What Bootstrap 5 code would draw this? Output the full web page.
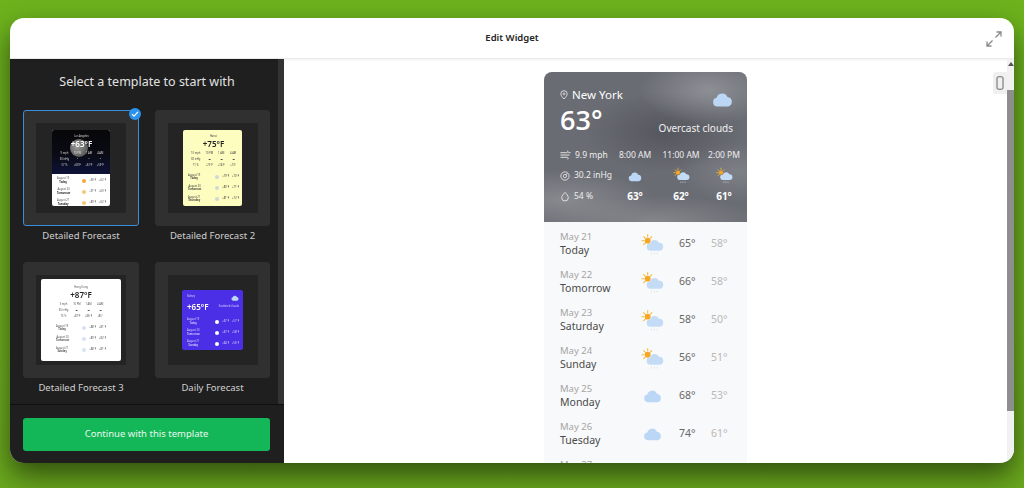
<!DOCTYPE html>
<html lang="en">
<head>
    <meta charset="UTF-8">
    <title>Edit Widget</title>
    <link rel="stylesheet" href="https://cdn.jsdelivr.net/npm/bootstrap@5.3.2/dist/css/bootstrap.min.css">
    <style>
        html, body { height: 488px; overflow: hidden; }
        body { background: linear-gradient(180deg, #6db31d 0%, #6fb020 70%, #6aa81e 100%); font-family: "Noto Sans", "Open Sans", sans-serif; padding: 18px 10px 25px; }
        .app-window { height: 445px; border-radius: 14px; overflow: hidden; box-shadow: 0 12px 28px rgba(0,0,0,.55); background: #fff; }
        .app-head { height: 41px; flex: none; border-bottom: 1px solid #e9e9e9; box-shadow: 0 1px 3px rgba(0,0,0,.06); }
        .app-title { font-size: 9.5px; font-weight: 600; color: #222; }
        .expand-btn { right: 12px; top: 13px; width: 16px; height: 16px; }
        .side-panel { width: 274px; flex: none; background: #1f1f1f; }
        .side-scroll { flex: 1; min-height: 0; overflow: hidden; padding: 0 13px; border-right: 6px solid #333; }
        .side-title { font-size: 12.5px; color: #e2e2e2; padding: 14px 0 19px; line-height: 17px; margin-right: -6px; }
        .tile-grid { display: grid; grid-template-columns: 116px 115px; column-gap: 16px; row-gap: 0; }
        .tile-item { height: 152px; text-align: center; }
        .tile-box { width: 100%; height: 116px; margin-top: 1px; background: #303030; border-radius: 3px; border: 1px solid #303030; }
        .tile-box.picked { border-color: #3a8fd8; }
        .tile-inner { width: 90px; height: 90px; background: #242424; }
        .tile-name { font-size: 9.5px; color: #d0d0d0; line-height: 13px; margin-top: 3px; }
        .tick-mark { right: -3px; top: -3px; width: 12px; height: 12px; background: #2b93ee; border-radius: 50%; }
        .side-foot { height: 59px; flex: none; border-top: 1px solid #101010; padding: 13px 13px 0; }
        .go-btn { height: 33px; width: 247px; background: #14b757; border: 0; border-radius: 3px; color: #e8f8ee; font-size: 9.5px; }

        .preview-pane { min-width: 0; }
        .preview-scroll { width: 7px; flex: none; background: #f1f1f1; }
        .bar-arrow { width: 0; height: 0; border: 3.5px solid transparent; border-top: 0; border-bottom: 4px solid #555; margin: 3px auto 0; }
        .bar-thumb { height: 321px; margin-top: 24px; background: #8e8e8e; }
        .preview-body { flex: 1; padding-top: 13px; overflow: hidden; }
        .phone-btn { right: 7px; top: 13px; width: 14px; height: 22px; background: #f0f0f0; border-radius: 3px 0 0 3px; }

        .wx-card { width: 203px; background: #f8f9fa; border-radius: 8px 8px 0 0; overflow: hidden; }
        .wx-top { height: 150px; padding: 15px 14px 0 16px; color: #fff;
            background:
                radial-gradient(70px 34px at 165px 18px, rgba(170,172,178,.55), transparent),
                radial-gradient(90px 30px at 20px 128px, rgba(165,167,172,.5), transparent),
                radial-gradient(80px 40px at 120px 60px, rgba(60,62,68,.45), transparent),
                radial-gradient(60px 30px at 195px 100px, rgba(150,152,158,.45), transparent),
                radial-gradient(110px 26px at 110px 150px, rgba(150,152,156,.6), transparent),
                #6a6c73; }
        .wx-city { font-size: 11.5px; line-height: 16px; }
        .wx-temp { font-size: 27px; font-weight: 600; line-height: 34px; font-family: "Open Sans", sans-serif; }
        .wx-sky { font-size: 10px; margin-top: 13px; color: #f0f0f0; }
        .wx-hours { display: grid; grid-template-columns: 52px 46px 46px 40px; grid-auto-rows: 20.5px; align-items: center; margin-top: 8px; font-size: 8.5px; color: #eee; text-align: center; }
        .wx-hours .wx-hour-big { font-size: 10px; font-weight: 700; color: #fff; }
        .wx-stat { display: flex; align-items: center; gap: 4px; text-align: left; white-space: nowrap; }
        .wx-days { padding: 3px 0 0 16px; }
        .wx-day { height: 38px; display: grid; grid-template-columns: 81px 38px 32px 30px; align-items: center; }
        .wx-date { font-size: 9.5px; color: #a5a5a5; line-height: 12px; }
        .wx-name { font-size: 10.5px; color: #4a4a4a; line-height: 14px; }
        .wx-high { font-size: 10.5px; color: #666; }
        .wx-low { font-size: 10.5px; color: #b8b8b8; }

        /* template thumbnails */
        .mini-card { font-size: 2.6px; line-height: 3.4px; overflow: hidden; border-radius: 2px; padding: 3px 3px 0 4px; filter: blur(.2px); white-space: nowrap; }
        .mini-temp { font-size: 8px; line-height: 11px; font-weight: 600; }
        .mini-grid { display: grid; grid-template-columns: 1.3fr 1fr 1fr 1fr; row-gap: 2.4px; margin-top: 3px; }
        .mini-day { display: flex; justify-content: space-between; align-items: center; height: 11px; line-height: 3.2px; }
        .mini-right { display: flex; gap: 3px; align-items: center; }
        .mini-dot { width: 4px; height: 4px; border-radius: 50%; display: inline-block; }
        .mini-dark { width: 58px; height: 76px; background: #fff; color: #555; padding: 0; position: relative; }
        .mini-dark-top { height: 44px; padding: 5px 4px 0 5px; color: #ddd; background: linear-gradient(180deg, #070709 0%, #0a0b14 55%, #0d1238 100%); }
        .mini-dark-days { padding: 1px 4px 0 5px; }
        .mini-moon { position: absolute; left: 18px; top: 9px; width: 18px; height: 18px; border-radius: 50%; background: radial-gradient(circle at 40% 45%, #9a9a9a, #5b5b5b 70%, #3c3c3c); }
        .mini-top-text { position: relative; }
        .mini-yellow { width: 59px; height: 76px; background: #fdfdbf; color: #444; padding: 5px 3px 0 5px; }
        .mini-white { width: 80px; height: 82px; background: #fff; color: #555; padding: 7px 15px 0 15px; }
        .mini-blue { width: 61px; height: 60px; background: #4b2fe6; color: #d8d4ff; padding: 5px 4px 0 5px; }
        .mini-strong { color: #222; }
        .mini-bright { color: #fff; }
    </style>
</head>
<body>

<svg width="0" height="0" class="position-absolute">
    <defs>
        <symbol id="i-cloud" viewBox="0 0 24 18">
            <path d="M6 17a5 5 0 0 1-.7-9.9A6.5 6.5 0 0 1 17.6 6 5.6 5.6 0 0 1 18.5 17z" fill="#bcd7f5"/>
        </symbol>
        <symbol id="i-suncloud" viewBox="0 0 24 24">
            <g stroke="#f5b93a" stroke-width="1.1" stroke-linecap="round">
                <path d="M7 1.5v2.4M7 12.5v2M1 8h2.4M2.8 3.8l1.7 1.7M11.2 3.8l-1.7 1.7M2.8 12.2l1.7-1.7"/>
            </g>
            <circle cx="7" cy="8" r="3" fill="#f5a623"/>
            <path d="M10 18.5a3.8 3.8 0 0 1-.5-7.6 5 5 0 0 1 9.3-.8 4.2 4.2 0 0 1 .4 8.4z" fill="#c4dbf6"/>
            <path d="M11 20.5v2M14 20.5v2M17 20.5v2" stroke="#d5dfe9" stroke-width=".8"/>
        </symbol>
        <symbol id="i-pin" viewBox="0 0 10 12">
            <path d="M5 11C3 8.8 1 6.8 1 4.6a4 4 0 0 1 8 0C9 6.8 7 8.8 5 11z" fill="none" stroke="currentColor" stroke-width=".9"/>
            <circle cx="5" cy="4.6" r="1.2" fill="none" stroke="currentColor" stroke-width=".8"/>
        </symbol>
        <symbol id="i-wind" viewBox="0 0 12 10">
            <path d="M0.5 2.5h6.5c2 0 2-2 .6-2M.5 5h10M.5 7.5h7c2 0 2 2 .6 2M9 2.5h2.5" fill="none" stroke="currentColor" stroke-width="1"/>
        </symbol>
        <symbol id="i-gauge" viewBox="0 0 12 12">
            <circle cx="6" cy="6" r="5" fill="none" stroke="currentColor" stroke-width="1"/>
            <circle cx="6" cy="6" r="2" fill="none" stroke="currentColor" stroke-width=".9"/>
            <path d="M6.8 5l2-2.4" stroke="currentColor" stroke-width="1"/>
        </symbol>
        <symbol id="i-drop" viewBox="0 0 12 12">
            <path d="M6 1C4.6 3 2 5 2 7.4a4 4 0 0 0 8 0C10 5 7.4 3 6 1z" fill="none" stroke="currentColor" stroke-width="1"/>
        </symbol>
    </defs>
</svg>

<div class="app-window d-flex flex-column">
    <header class="app-head position-relative d-flex align-items-center justify-content-center">
        <span class="app-title">Edit Widget</span>
        <svg class="expand-btn position-absolute" viewBox="0 0 16 16" fill="none" stroke="#8a8a8a" stroke-width="1.3">
            <path d="M9.5 6.5L15 1M10.5 1H15v4.5M6.5 9.5L1 15M5.5 15H1v-4.5"/>
        </svg>
    </header>

    <div class="d-flex flex-grow-1" style="min-height:0">
        <aside class="side-panel d-flex flex-column">
            <div class="side-scroll">
                <div class="side-title text-center">Select a template to start with</div>
                <div class="tile-grid">
                    <div class="tile-item">
                        <div class="tile-box picked position-relative d-flex align-items-center justify-content-center">
                            <div class="tile-inner d-flex align-items-center justify-content-center">
                                <div class="mini-card mini-dark">
                                    <div class="mini-dark-top">
                                        <span class="mini-moon"></span>
                                        <div class="mini-top-text">
                                            <div>Los Angeles</div>
                                            <div class="mini-temp mini-bright">+63°F</div>
                                            <div class="mini-grid"><span>9 mph</span><span>10 PM</span><span>1 AM</span><span>4 AM</span><span>30 inHg</span><span>•</span><span>•</span><span>•</span><span>57 %</span><span>+63°F</span><span>+61°F</span><span>+59°F</span></div>
                                        </div>
                                    </div>
                                    <div class="mini-dark-days">
                                        <div class="mini-day"><div>August 19<br><b class="mini-strong">Today</b></div><div class="mini-right"><i class="mini-dot" style="background:#f2a93a"></i><span>+90°F</span><span>+62°F</span></div></div>
                                        <div class="mini-day"><div>August 20<br><b class="mini-strong">Tomorrow</b></div><div class="mini-right"><i class="mini-dot" style="background:#f5c676"></i><span>+91°F</span><span>+63°F</span></div></div>
                                        <div class="mini-day"><div>August 21<br><b class="mini-strong">Tuesday</b></div><div class="mini-right"><i class="mini-dot" style="background:#f5c676"></i><span>+89°F</span><span>+62°F</span></div></div>
                                    </div>
                                </div>
                            </div>
                            <span class="tick-mark position-absolute d-flex align-items-center justify-content-center">
                                <svg width="8" height="8" viewBox="0 0 8 8" fill="none" stroke="#fff" stroke-width="1.2"><path d="M1 4.2l2 2 4-4.4"/></svg>
                            </span>
                        </div>
                        <div class="tile-name">Detailed Forecast</div>
                    </div>

                    <div class="tile-item">
                        <div class="tile-box d-flex align-items-center justify-content-center">
                            <div class="tile-inner d-flex align-items-center justify-content-center">
                                <div class="mini-card mini-yellow">
                                    <div>Hanoi</div>
                                    <div class="mini-temp mini-strong">+75°F</div>
                                    <div class="mini-grid"><span>10 mph</span><span>10 PM</span><span>1 AM</span><span>4 AM</span><span>30 inHg</span><span>☁</span><span>☁</span><span>☁</span><span>71 %</span><span>+75°F</span><span>+74°F</span><span>+73°</span></div>
                                    <div class="mini-day mt-1"><div>August 19<br><b>Today</b></div><div class="mini-right"><i class="mini-dot" style="background:#cfd8d8"></i><span>+79°F</span><span>+70°F</span></div></div>
                                    <div class="mini-day"><div>August 20<br><b>Tomorrow</b></div><div class="mini-right"><i class="mini-dot" style="background:#cfd8d8"></i><span>+80°F</span><span>+71°F</span></div></div>
                                    <div class="mini-day"><div>August 21<br><b>Thursday</b></div><div class="mini-right"><i class="mini-dot" style="background:#cfd8d8"></i><span>+81°F</span><span>+72°F</span></div></div>
                                </div>
                            </div>
                        </div>
                        <div class="tile-name">Detailed Forecast 2</div>
                    </div>

                    <div class="tile-item">
                        <div class="tile-box d-flex align-items-center justify-content-center">
                            <div class="tile-inner d-flex align-items-center justify-content-center">
                                <div class="mini-card mini-white">
                                    <div>Hong Kong</div>
                                    <div class="mini-temp mini-strong">+87°F</div>
                                    <div class="mini-grid"><span>5 mph</span><span>10 PM</span><span>1 AM</span><span>4 AM</span><span>30 inHg</span><span>☁</span><span>☁</span><span>☁</span><span>75 %</span><span>+87°F</span><span>+86°F</span><span>+85°</span></div>
                                    <div class="mini-day mt-1"><div>August 19<br><b>Today</b></div><div class="mini-right"><i class="mini-dot" style="background:#d6e2f6"></i><span>+88°F</span><span>+81°F</span></div></div>
                                    <div class="mini-day"><div>August 20<br><b>Tomorrow</b></div><div class="mini-right"><i class="mini-dot" style="background:#d6e2f6"></i><span>+89°F</span><span>+82°F</span></div></div>
                                    <div class="mini-day"><div>August 21<br><b>Sunday</b></div><div class="mini-right"><i class="mini-dot" style="background:#d6e2f6"></i><span>+88°F</span><span>+81°F</span></div></div>
                                </div>
                            </div>
                        </div>
                        <div class="tile-name">Detailed Forecast 3</div>
                    </div>

                    <div class="tile-item">
                        <div class="tile-box d-flex align-items-center justify-content-center">
                            <div class="tile-inner d-flex align-items-center justify-content-center">
                                <div class="mini-card mini-blue">
                                    <div class="d-flex justify-content-between"><span>Sidney</span><svg width="8" height="6"><use href="#i-cloud" style="color:#fff"/></svg></div>
                                    <div class="d-flex justify-content-between align-items-center"><span class="mini-temp mini-bright">+65°F</span><span>Scattered clouds</span></div>
                                    <div class="mini-day mt-1"><div>August 19<br><span class="mini-bright">Today</span></div><div class="mini-right"><i class="mini-dot bg-white"></i><span>+67°F</span><span>+57°F</span></div></div>
                                    <div class="mini-day"><div>August 20<br><span class="mini-bright">Tomorrow</span></div><div class="mini-right"><i class="mini-dot bg-white"></i><span>+67°F</span><span>+58°F</span></div></div>
                                    <div class="mini-day"><div>August 21<br><span class="mini-bright">Tuesday</span></div><div class="mini-right"><i class="mini-dot bg-white"></i><span>+64°F</span><span>+56°F</span></div></div>
                                </div>
                            </div>
                        </div>
                        <div class="tile-name">Daily Forecast</div>
                    </div>
                </div>
            </div>
            <div class="side-foot">
                <button type="button" class="btn go-btn p-0">Continue with this template</button>
            </div>
        </aside>

        <main class="preview-pane d-flex flex-grow-1 position-relative">
            <div class="preview-body d-flex justify-content-center">
                <div class="wx-card">
                    <section class="wx-top">
                        <div class="d-flex justify-content-between">
                            <div>
                                <div class="wx-city d-flex align-items-center gap-1"><svg width="8" height="10"><use href="#i-pin"/></svg>New York</div>
                                <div class="wx-temp">63°</div>
                            </div>
                            <div class="d-flex flex-column align-items-end">
                                <svg width="21" height="17" class="mt-1"><use href="#i-cloud"/></svg>
                                <div class="wx-sky">Overcast clouds</div>
                            </div>
                        </div>
                        <div class="wx-hours">
                            <span class="wx-stat"><svg width="11" height="10"><use href="#i-wind"/></svg>9.9 mph</span>
                            <span>8:00 AM</span><span>11:00 AM</span><span>2:00 PM</span>
                            <span class="wx-stat"><svg width="10" height="10"><use href="#i-gauge"/></svg>30.2 inHg</span>
                            <span><svg width="14" height="11"><use href="#i-cloud"/></svg></span>
                            <span><svg width="17" height="17"><use href="#i-suncloud"/></svg></span>
                            <span><svg width="17" height="17"><use href="#i-suncloud"/></svg></span>
                            <span class="wx-stat"><svg width="10" height="11"><use href="#i-drop"/></svg>54 %</span>
                            <span class="wx-hour-big">63°</span><span class="wx-hour-big">62°</span><span class="wx-hour-big">61°</span>
                        </div>
                    </section>
                    <section class="wx-days">
                        <div class="wx-day"><div><div class="wx-date">May 21</div><div class="wx-name">Today</div></div><svg width="23" height="23"><use href="#i-suncloud"/></svg><span class="wx-high">65°</span><span class="wx-low">58°</span></div>
                        <div class="wx-day"><div><div class="wx-date">May 22</div><div class="wx-name">Tomorrow</div></div><svg width="23" height="23"><use href="#i-suncloud"/></svg><span class="wx-high">66°</span><span class="wx-low">58°</span></div>
                        <div class="wx-day"><div><div class="wx-date">May 23</div><div class="wx-name">Saturday</div></div><svg width="23" height="23"><use href="#i-suncloud"/></svg><span class="wx-high">58°</span><span class="wx-low">50°</span></div>
                        <div class="wx-day"><div><div class="wx-date">May 24</div><div class="wx-name">Sunday</div></div><svg width="23" height="23"><use href="#i-suncloud"/></svg><span class="wx-high">56°</span><span class="wx-low">51°</span></div>
                        <div class="wx-day"><div><div class="wx-date">May 25</div><div class="wx-name">Monday</div></div><svg width="23" height="14"><use href="#i-cloud"/></svg><span class="wx-high">68°</span><span class="wx-low">53°</span></div>
                        <div class="wx-day"><div><div class="wx-date">May 26</div><div class="wx-name">Tuesday</div></div><svg width="23" height="14"><use href="#i-cloud"/></svg><span class="wx-high">74°</span><span class="wx-low">61°</span></div>
                        <div class="wx-day"><div><div class="wx-date">May 27</div><div class="wx-name">Wednesday</div></div><svg width="23" height="14"><use href="#i-cloud"/></svg><span class="wx-high">70°</span><span class="wx-low">60°</span></div>
                    </section>
                </div>
            </div>
            <div class="preview-scroll">
                <div class="bar-arrow"></div>
                <div class="bar-thumb"></div>
            </div>
            <div class="phone-btn position-absolute d-flex align-items-center justify-content-center">
                <svg width="8" height="14" viewBox="0 0 8 14" fill="none" stroke="#666" stroke-width="1"><rect x="1" y=".8" width="6" height="12.4" rx="1.2"/></svg>
            </div>
        </main>
    </div>
</div>

<script src="https://cdn.jsdelivr.net/npm/bootstrap@5.3.2/dist/js/bootstrap.bundle.min.js"></script>
</body>
</html>
